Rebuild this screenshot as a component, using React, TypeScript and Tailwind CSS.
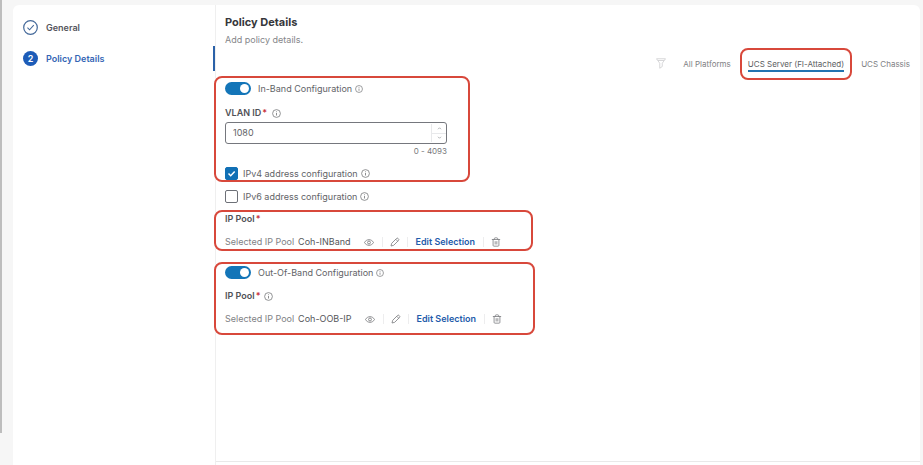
import { useState, type ReactNode } from "react";
import { Trash2 } from "lucide-react";
import clsx from "clsx";

const platforms = ["All Platforms", "UCS Server (FI-Attached)", "UCS Chassis"];

function InfoIcon({ className = "size-[9px]" }: { className?: string }) {
  return (
    <svg viewBox="0 0 18 18" fill="none" stroke="currentColor" className={clsx("shrink-0 text-[#77787b]", className)} aria-hidden>
      <circle cx="9" cy="9" r="7.8" strokeWidth="1.6" />
      <path d="M9 8v5M9 4.8v1.6" strokeWidth="1.7" />
    </svg>
  );
}

function FilterIcon() {
  return (
    <svg viewBox="0 0 20 22" fill="none" stroke="currentColor" strokeWidth="1.5" strokeLinejoin="round" className="h-[11px] w-[10px] text-[#c9cacc]" aria-hidden>
      <path d="M1 1.5h18l-6.5 9V17l-5 3.500v-10z" />
      <path d="M4 5h12" />
    </svg>
  );
}

function EyeIcon() {
  return (
    <svg viewBox="0 0 20 14" fill="none" stroke="currentColor" strokeWidth="1.8" className="h-[7px] w-[10px]" aria-hidden>
      <path d="M1 7c2-3.600 5.200-5.600 9-5.600S17 3.400 19 7c-2 3.600-5.200 5.600-9 5.600S3 10.600 1 7z" />
      <circle cx="10" cy="7" r="2.900" />
    </svg>
  );
}

function PencilIcon() {
  return (
    <svg viewBox="0 0 20 20" fill="none" stroke="currentColor" strokeWidth="1.700" strokeLinejoin="round" className="size-[10px]" aria-hidden>
      <path d="M2 18l1.400-5.400L13.200 2.800c.8-.8 2-.8 2.800 0l1.200 1.200c.8.8.8 2 0 2.800L7.400 16.600z" />
      <path d="M11.500 4.500l4 4" />
    </svg>
  );
}

function Highlight({ className, children }: { className?: string; children: ReactNode }) {
  return (
    <section className={clsx("-ml-[11px] rounded-lg border-2 border-[#d8483b] pl-[9px]", className)}>
      {children}
    </section>
  );
}

function Toggle({ id, label }: { id: string; label: string }) {
  return (
    <div className="flex h-[13px] items-center">
      <input
        id={id}
        type="checkbox"
        role="switch"
        defaultChecked
        className="flex h-[13px] w-[26px] appearance-none items-center rounded-full bg-[#b4b6b9] px-[2px] before:size-[9px] before:rounded-full before:bg-white checked:justify-end checked:bg-[#1375b8]"
      />
      <label htmlFor={id} className="ml-[7px] mr-[3px]">
        {label}
      </label>
      <InfoIcon className="size-[8px]" />
    </div>
  );
}

function Checkbox({ id, label, checked }: { id: string; label: string; checked?: boolean }) {
  return (
    <div className="flex h-[13px] items-center">
      <span className="relative size-[13px]">
        <input
          id={id}
          type="checkbox"
          defaultChecked={checked}
          className="peer block size-[13px] appearance-none rounded-[2px] border border-[#6d7077] bg-white checked:border-[#1170b5] checked:bg-[#1170b5]"
        />
        <svg viewBox="0 0 13 13" fill="none" stroke="white" strokeWidth="1.500" className="pointer-events-none absolute inset-0 hidden peer-checked:block" aria-hidden>
          <path d="M3.500 6.500l2.200 2.200 4-4.200" />
        </svg>
      </span>
      <label htmlFor={id} className="ml-[5px] mr-[3px]">
        {label}
      </label>
      <InfoIcon />
    </div>
  );
}

function Required() {
  return <span className="ml-px text-[#c8323c]">*</span>;
}

function SelectedPool({ name }: { name: string }) {
  return (
    <div className="flex h-3 items-center text-[#808184]">
      <span>Selected IP Pool</span>
      <span className="ml-1 text-[#55565a]">{name}</span>
      <div className="ml-[5px] flex items-center divide-x divide-[#ededee]">
        <button type="button" aria-label="View" className="flex h-[10px] items-center px-2">
          <EyeIcon />
        </button>
        <button type="button" aria-label="Edit" className="flex h-[10px] items-center px-[7px]">
          <PencilIcon />
        </button>
        <button type="button" className="flex h-[10px] items-center px-2 font-semibold text-[#1f5cab]">
          Edit Selection
        </button>
        <button type="button" aria-label="Remove" className="flex h-[10px] items-center px-[7px]">
          <Trash2 className="size-[10px]" strokeWidth={2} />
        </button>
      </div>
    </div>
  );
}

function Steps() {
  return (
    <nav className="w-[202px] shrink-0 pt-[10px] font-semibold">
      <a href="#general" className="flex h-[25px] items-center gap-2 pl-[10px] text-[#55565d]">
        <svg viewBox="0 0 32 32" fill="none" stroke="#44699a" className="size-[15px]" aria-hidden>
          <circle cx="16" cy="16" r="14.500" strokeWidth="2.600" />
          <path d="M9.500 16.500l4.500 4.500 9-10" strokeWidth="2.200" />
        </svg>
        General
      </a>
      <a
        href="#policy-details"
        aria-current="step"
        className="mt-[6px] flex h-[25px] items-center gap-2 border-r-2 border-[#2b61a8] pl-[10px] text-[#3565b5]"
      >
        <span className="flex size-[15px] items-center justify-center rounded-full bg-[#1d5cb8] text-white">2</span>
        Policy Details
      </a>
    </nav>
  );
}

function PlatformTabs() {
  const [active, setActive] = useState(platforms[1]);
  return (
    <div className="mt-[5px] flex h-[25px] items-center justify-end gap-[17px] pr-[10px] text-[8px] text-[#808184]">
      <button type="button" aria-label="Filter">
        <FilterIcon />
      </button>
      {platforms.map((name) => (
        <button
          key={name}
          type="button"
          onClick={() => setActive(name)}
          className={clsx("relative leading-3", name === active && "text-[#5c5e62]")}
        >
          {name}
          {name === active && (
            <>
              <span className="absolute inset-x-0 top-[12px] h-[2px] bg-[#2274b0]" />
              <span className="absolute -inset-x-2 -inset-y-[10px] rounded-lg border-2 border-[#d8483b]" />
            </>
          )}
        </button>
      ))}
    </div>
  );
}

export default function App() {
  return (
    <div className="flex min-h-screen bg-[#f6f6f6] font-['Inter',sans-serif] text-[9px] leading-3 text-[#626367]">
      <div className="mb-8 w-[2px] shrink-0 bg-[#bdbdbd]" />
      <div className="ml-[11px] mr-[3px] mt-[5px] flex grow rounded-t-md bg-white">
        <Steps />
        <main className="flex min-w-0 grow flex-col border-l border-[#efefef]">
          <div className="grow pl-[9px] pt-2">
            <h1 className="text-[11px] font-bold leading-[18px] text-[#36373b]">Policy Details</h1>
            <p className="mt-[3px] text-[#85868a]">Add policy details.</p>
            <PlatformTabs />

            <Highlight className="w-[256px] pt-1">
              <Toggle id="in-band" label="In-Band Configuration" />
              <div className="mt-3 flex items-center">
                <label htmlFor="vlan" className="font-semibold text-[#505156]">
                  VLAN ID
                  <Required />
                </label>
                <InfoIcon className="ml-[5px] size-[9px]" />
              </div>
              <div className="mt-[3px] flex h-[22px] w-[222px] rounded-[3px] border border-[#75777d]">
                <input id="vlan" type="text" inputMode="numeric" defaultValue="1080" className="min-w-0 grow pl-[7px] outline-none" />
                <div className="my-px flex w-[15px] flex-col divide-y divide-[#e8e9eb] border-l border-[#e8e9eb] text-[#97999d]">
                  <button type="button" aria-label="Increase" className="flex flex-1 items-center justify-center">
                    <svg viewBox="0 0 6 4" fill="none" stroke="currentColor" className="h-[3px] w-[5px]" aria-hidden>
                      <path d="M1 3l2-2 2 2" />
                    </svg>
                  </button>
                  <button type="button" aria-label="Decrease" className="flex flex-1 items-center justify-center">
                    <svg viewBox="0 0 6 4" fill="none" stroke="currentColor" className="h-[3px] w-[5px]" aria-hidden>
                      <path d="M1 1l2 2 2-2" />
                    </svg>
                  </button>
                </div>
              </div>
              <p className="mb-[10px] mt-[1px] w-[222px] text-right text-[8px] text-[#77787b]">0 - 4093</p>
              <Checkbox id="ipv4" label="IPv4 address configuration" checked />
            </Highlight>

            <div className="mb-[7px] mt-2">
              <Checkbox id="ipv6" label="IPv6 address configuration" />
            </div>

            <Highlight className="w-[319px] pb-px pt-px">
              <h2 className="mb-[11px] font-semibold text-[#505156]">
                IP Pool
                <Required />
              </h2>
              <SelectedPool name="Coh-INBand" />
            </Highlight>

            <Highlight className="mt-[11px] w-[321px] pb-2 pt-[2px]">
              <Toggle id="out-of-band" label="Out-Of-Band Configuration" />
              <h2 className="my-[11px] flex items-center font-semibold text-[#505156]">
                IP Pool
                <Required />
                <InfoIcon className="ml-1 size-[9px]" />
              </h2>
              <SelectedPool name="Coh-OOB-IP" />
            </Highlight>
          </div>
          <footer className="h-[4px] border-t border-[#e9e9e9]" />
        </main>
      </div>
    </div>
  );
}
